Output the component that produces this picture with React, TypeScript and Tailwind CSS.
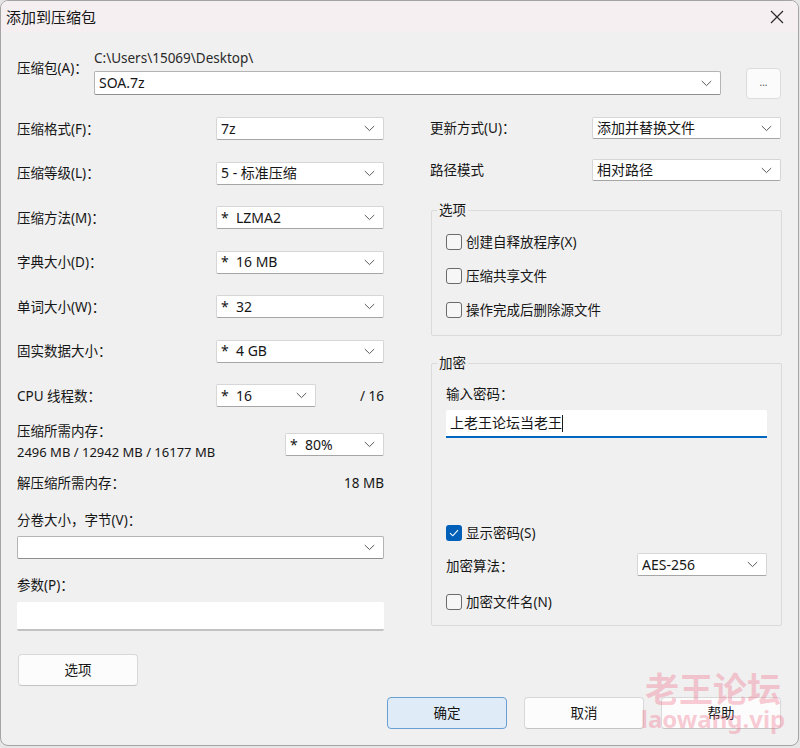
import React from "react";

function Chevron() {
  return (
    <svg width="11" height="7" viewBox="0 0 11 7" className="shrink-0">
      <path d="M0.8 1 L5.5 5.6 L10.2 1" stroke="#5a5a5a" strokeWidth="1" fill="none" />
    </svg>
  );
}

function Select({ className = "", text = "", edit = false }: { className?: string; text?: string; edit?: boolean }) {
  return (
    <div
      className={`flex items-center justify-between bg-white border rounded-[2px] pl-[4px] pr-[8px] ${
        edit ? "border-[#b4b4b4] border-b-[#8e8e8e]" : "border-[#d6d6d6] border-b-[#a6a6a6]"
      } ${className}`}
    >
      <span className="whitespace-pre text-[14px] leading-[16px]">{text}</span>
      <Chevron />
    </div>
  );
}

function Checkbox({ checked = false, label }: { checked?: boolean; label: string }) {
  return (
    <div className="flex items-center h-[20px] gap-[4px]">
      {checked ? (
        <div className="w-[16px] h-[16px] rounded-[3px] bg-[#005fb8] flex items-center justify-center">
          <svg width="10" height="8" viewBox="0 0 10 8">
            <path d="M1 4.2 L3.8 6.8 L9 1.2" stroke="white" strokeWidth="1.1" fill="none" />
          </svg>
        </div>
      ) : (
        <div className="w-[16px] h-[16px] rounded-[3px] border border-[#6b6b6b] bg-[#f6f6f6]" />
      )}
      <span className="text-[13.5px] leading-[16px]">{label}</span>
    </div>
  );
}

function Btn({ label, primary = false, className = "" }: { label: string; primary?: boolean; className?: string }) {
  return (
    <div
      className={`w-[120px] h-[32px] flex items-center justify-center rounded-[4px] border text-[13.5px] ${
        primary ? "bg-[#e0ebf8] border-[#6a9fd3]" : "bg-[#fcfcfc] border-[#d8d8d8] border-b-[#c4c4c4]"
      } ${className}`}
    >
      {label}
    </div>
  );
}

export default function App() {
  return (
    <div className="w-[800px] h-[748px] bg-[#e6e6e6] font-['Noto_Sans','Noto_Sans_CJK_SC',sans-serif] text-[#161616]">
      <div className="w-[799px] h-[746px] border border-[#a4a4a4] rounded-[8px] overflow-hidden flex flex-col bg-[#f0f0f0] relative">
        {/* title bar */}
        <div className="h-[31px] bg-[#f5eff1] flex items-center justify-between pl-[5px] pr-[14px] shrink-0">
          <span className="text-[15px] leading-[18px] font-['Noto_Sans_CJK_SC',sans-serif]">添加到压缩包</span>
          <svg width="14" height="14" viewBox="0 0 14 14">
            <path d="M1 1 L13 13 M13 1 L1 13" stroke="#2a2a2a" strokeWidth="1.2" />
          </svg>
        </div>

        {/* body */}
        <div className="flex-1 flex flex-col pl-[16px] pt-[18px]">
          {/* archive row */}
          <div className="flex items-start h-[49px]">
            <div className="w-[77px] shrink-0 mt-[10px] text-[13.5px] leading-[16px]">压缩包(A)：</div>
            <div className="w-[627px] shrink-0 flex flex-col">
              <div className="text-[13.5px] leading-[16px] text-[#2a2a2a]">C:\Users\15069\Desktop\</div>
              <Select edit className="mt-[5px] h-[24px]" text="SOA.7z" />
            </div>
            <div className="ml-[25px] mt-[18px] w-[35px] h-[31px] bg-[#fbfbfb] border border-[#dcdcdc] rounded-[4px] flex items-center justify-center text-[10px] text-[#555] pb-[2px]">
              ...
            </div>
          </div>

          {/* columns */}
          <div className="flex mt-[18px]">
            {/* left column */}
            <div className="w-[367px] flex flex-col text-[13.5px]">
              <div className="flex flex-col gap-[21.5px]">
                {[
                  ["压缩格式(F)：", "7z"],
                  ["压缩等级(L)：", "5 - 标准压缩"],
                  ["压缩方法(M)：", "*  LZMA2"],
                  ["字典大小(D)：", "*  16 MB"],
                  ["单词大小(W)：", "*  32"],
                  ["固实数据大小：", "*  4 GB"],
                ].map(([l, v]) => (
                  <div key={l} className="flex items-center justify-between h-[23px]">
                    <span className="leading-[16px]">{l}</span>
                    <Select className="w-[168px] h-[23px]" text={v} />
                  </div>
                ))}
                <div className="flex items-center h-[23px]">
                  <span className="w-[199px] leading-[16px]">CPU 线程数：</span>
                  <Select className="w-[100px] h-[23px]" text="*  16" />
                  <span className="flex-1 text-right leading-[16px]">/ 16</span>
                </div>
              </div>

              <div className="flex justify-between mt-[14px]">
                <div className="flex flex-col leading-[21px]">
                  <span>压缩所需内存：</span>
                  <span className="text-[13px]">2496 MB / 12942 MB / 16177 MB</span>
                </div>
                <Select className="w-[99px] h-[23px] mt-[12px]" text="*  80%" />
              </div>

              <div className="flex justify-between mt-[12px] leading-[16px]">
                <span>解压缩所需内存：</span>
                <span>18 MB</span>
              </div>

              <div className="mt-[21px] leading-[16px]">分卷大小，字节(V)：</div>
              <Select edit className="mt-[8px] h-[23px] w-full" text="" />

              <div className="mt-[18px] leading-[16px]">参数(P)：</div>
              <div className="mt-[9px] h-[29px] w-full bg-white border-b-2 border-[#c2c2c2] rounded-[2px]" />

              <Btn label="选项" className="mt-[23px] ml-[1px] h-[31px]" />
            </div>

            {/* right column */}
            <div className="w-[352px] ml-[46px] flex flex-col text-[13.5px]">
              <div className="flex items-center justify-between h-[22px]">
                <span className="leading-[16px]">更新方式(U)：</span>
                <Select className="w-[189px] h-[22px] mr-[1px]" text="添加并替换文件" />
              </div>
              <div className="flex items-center justify-between h-[22px] mt-[20px]">
                <span className="leading-[16px]">路径模式</span>
                <Select className="w-[189px] h-[22px] mr-[1px]" text="相对路径" />
              </div>

              <div className="relative mt-[29px] ml-[1px] w-[351px] h-[126px] border border-[#dadada] rounded-[2px] flex flex-col pl-[14px] pt-[21px] gap-[14px]">
                <span className="absolute -top-[9px] left-[5px] px-[2px] bg-[#f0f0f0] leading-[16px]">选项</span>
                <Checkbox label="创建自释放程序(X)" />
                <Checkbox label="压缩共享文件" />
                <Checkbox label="操作完成后删除源文件" />
              </div>

              <div className="relative mt-[27px] ml-[1px] w-[351px] h-[263px] border border-[#dadada] rounded-[2px] flex flex-col pl-[14px] pr-[14px] pt-[22px]">
                <span className="absolute -top-[9px] left-[5px] px-[2px] bg-[#f0f0f0] leading-[16px]">加密</span>
                <div className="leading-[16px]">输入密码：</div>
                <div className="mt-[8px] h-[28px] bg-white border-b-2 border-[#0067c0] rounded-t-[2px] flex items-center pl-[4px]">
                  <span className="text-[14px] leading-[16px]">上老王论坛当老王</span>
                  <span className="w-[1px] h-[17px] bg-[#1a1a1a]" />
                </div>
                <div className="mt-[85px]">
                  <Checkbox checked label="显示密码(S)" />
                </div>
                <div className="mt-[10px] flex items-center justify-between h-[23px]">
                  <span className="leading-[16px] mt-[2px]">加密算法：</span>
                  <Select className="w-[130px] h-[23px]" text="AES-256" />
                </div>
                <div className="mt-[16px]">
                  <Checkbox label="加密文件名(N)" />
                </div>
              </div>
            </div>
          </div>

          {/* buttons */}
          <div className="flex justify-end gap-[17px] mt-[11px] pr-[17px]">
            <Btn primary label="确定" />
            <Btn label="取消" />
            <Btn label="帮助" />
          </div>
        </div>

        {/* watermark */}
        <div className="absolute left-[640px] top-[666px] w-[144px] flex flex-col items-center pointer-events-none text-[#ee6d88]/35 font-bold font-['Noto_Sans_CJK_SC',sans-serif]">
          <span className="text-[34px] leading-[42px]">老王论坛</span>
          <span className="text-[24px] leading-[28px] font-['Noto_Sans',sans-serif] -mt-[4px]">laowang.vip</span>
        </div>
      </div>
    </div>
  );
}
